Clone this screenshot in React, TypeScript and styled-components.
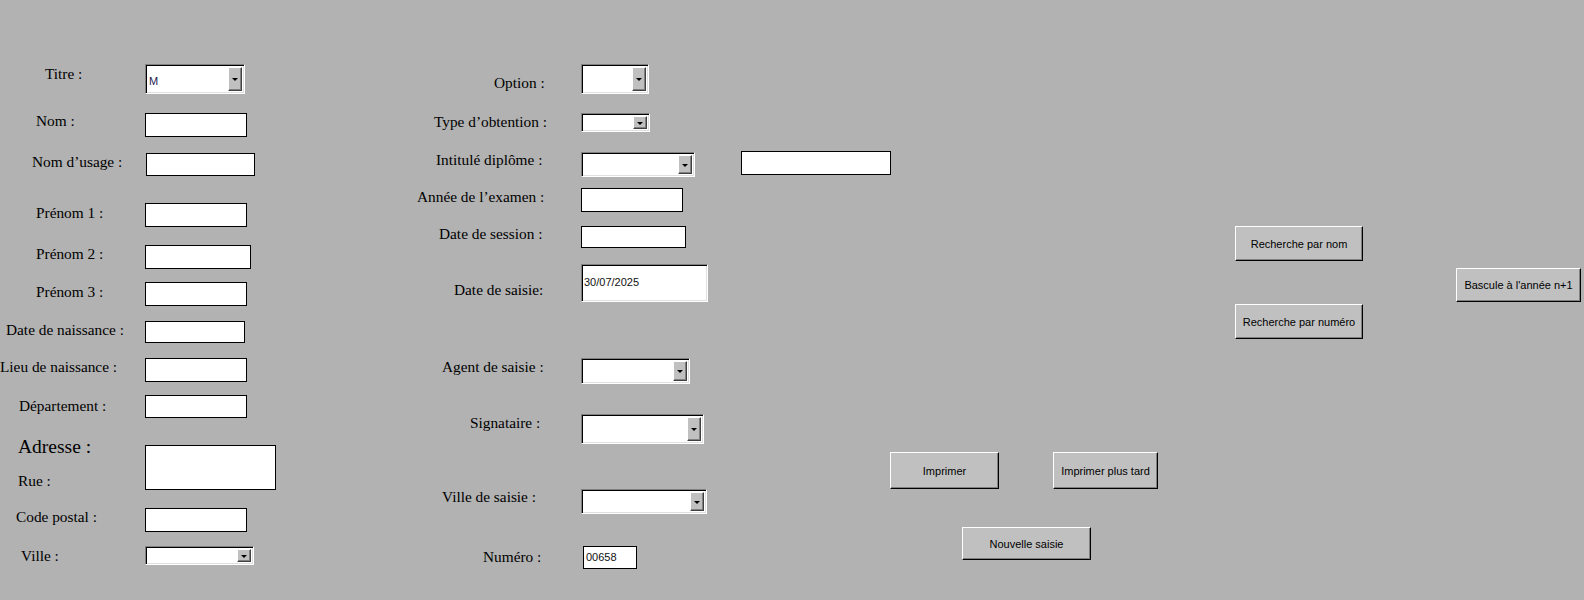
import React from 'react';
import styled, {createGlobalStyle} from 'styled-components';

const GlobalStyle = createGlobalStyle`
  html, body {
    margin: 0;
    padding: 0;
    background: #b2b2b2;
  }
`;

// the sheet: form controls sit on it at the place the form designer gave them
const Sheet = styled.div`
  position: relative;
  width: 1584px;
  height: 600px;
  background: #b2b2b2;
  overflow: hidden;
  font-family: "Liberation Serif", "Times New Roman", serif;
`;

interface Place {
    x: number;
    y: number;
    w?: number;
    h?: number;
}

const Placed = styled.div<{ $x: number; $y: number; $w?: number; $h?: number }>`
  position: absolute;
  left: ${({$x}) => $x}px;
  top: ${({$y}) => $y}px;
  ${({$w}) => ($w ? `width: ${$w}px;` : '')}
  ${({$h}) => ($h ? `height: ${$h}px;` : '')}
  box-sizing: border-box;
`;

const Label = styled(Placed)<{ $big?: boolean }>`
  font-size: ${({$big}) => ($big ? 19.5 : 15.33)}px;
  line-height: ${({$big}) => ($big ? 24 : 20)}px;
  color: #000;
  white-space: nowrap;
`;

const TextField = styled(Placed)<{ $sunken?: boolean }>`
  background: #fff;
  border: 1px solid #000;
  ${({$sunken}) =>
    $sunken &&
    `
    border-color: #808080 #fff #fff #808080;
    box-shadow: inset 1px 1px 0 #000, inset -1px -1px 0 #dfdfdf;
  `}
  font-family: "Liberation Sans", Arial, sans-serif;
  font-size: 11px;
  color: #111;
  display: flex;
  align-items: center;
  padding: 0 2px 2px;
`;

const SelectBox = styled(Placed)`
  background: #fff;
  border: 1px solid;
  border-color: #808080 #fff #fff #808080;
  box-shadow: inset 1px 1px 0 #000, inset -1px -1px 0 #dfdfdf;
  display: flex;
  align-items: stretch;
  padding: 2px;
  font-family: "Liberation Sans", Arial, sans-serif;
  font-size: 11px;
  color: #1a1a50;
`;

const SelectValue = styled.span`
  flex: 1;
  display: flex;
  align-items: center;
  padding-left: 1px;
  padding-top: 3px;
`;

const DropButton = styled.span`
  width: 14px;
  background: #c0c0c0;
  border: 1px solid;
  border-color: #fff #404040 #404040 #fff;
  box-shadow: inset -1px -1px 0 #808080;
  box-sizing: border-box;
  display: flex;
  align-items: center;
  justify-content: center;

  &::after {
    content: '';
    border-left: 3px solid transparent;
    border-right: 3px solid transparent;
    border-top: 3px solid #000;
    margin-top: 1px;
  }
`;

const Button = styled(Placed).attrs({as: 'button'})`
  background: #c0c0c0;
  border: 1px solid;
  border-color: #fff #000 #000 #fff;
  box-shadow: inset -1px -1px 0 #808080;
  font-family: "Liberation Sans", Arial, sans-serif;
  font-size: 11px;
  color: #000;
  padding: 0;
  cursor: default;
`;

type LabelDef = { text: string; x: number; cy: number; big?: boolean };

const labels: LabelDef[] = [
    {text: 'Titre :', x: 45, cy: 74},
    {text: 'Nom :', x: 36, cy: 121},
    {text: 'Nom d’usage :', x: 32, cy: 162},
    {text: 'Prénom 1 :', x: 36, cy: 213},
    {text: 'Prénom 2 :', x: 36, cy: 254},
    {text: 'Prénom 3 :', x: 36, cy: 292},
    {text: 'Date de naissance :', x: 6, cy: 330},
    {text: 'Lieu de naissance :', x: 0, cy: 367},
    {text: 'Département :', x: 19, cy: 406},
    {text: 'Adresse :', x: 18, cy: 447, big: true},
    {text: 'Rue :', x: 18, cy: 481},
    {text: 'Code postal :', x: 16, cy: 517},
    {text: 'Ville :', x: 21, cy: 556},
    {text: 'Option :', x: 494, cy: 83},
    {text: 'Type d’obtention :', x: 434, cy: 122},
    {text: 'Intitulé diplôme :', x: 436, cy: 160},
    {text: 'Année de l’examen :', x: 417, cy: 197},
    {text: 'Date de session :', x: 439, cy: 234},
    {text: 'Date de saisie:', x: 454, cy: 290},
    {text: 'Agent de saisie :', x: 442, cy: 367},
    {text: 'Signataire :', x: 470, cy: 423},
    {text: 'Ville de saisie :', x: 442, cy: 497},
    {text: 'Numéro :', x: 483, cy: 557},
];

const fields: (Place & { value?: string; sunken?: boolean })[] = [
    {x: 145, y: 113, w: 102, h: 24},
    {x: 146, y: 153, w: 109, h: 23},
    {x: 145, y: 203, w: 102, h: 24},
    {x: 145, y: 245, w: 106, h: 24},
    {x: 145, y: 282, w: 102, h: 24},
    {x: 145, y: 321, w: 100, h: 22},
    {x: 145, y: 358, w: 102, h: 24},
    {x: 145, y: 395, w: 102, h: 23},
    {x: 145, y: 445, w: 131, h: 45},
    {x: 145, y: 508, w: 102, h: 24},
    {x: 581, y: 188, w: 102, h: 24},
    {x: 581, y: 226, w: 105, h: 22},
    {x: 741, y: 151, w: 150, h: 24},
    {x: 581, y: 264, w: 127, h: 38, value: '30/07/2025', sunken: true},
    {x: 583, y: 546, w: 54, h: 23, value: '00658'},
];

const selects: (Place & { value?: string })[] = [
    {x: 145, y: 64, w: 100, h: 30, value: 'M'},
    {x: 145, y: 546, w: 109, h: 19},
    {x: 581, y: 64, w: 68, h: 30},
    {x: 581, y: 113, w: 69, h: 19},
    {x: 581, y: 152, w: 114, h: 25},
    {x: 581, y: 358, w: 109, h: 26},
    {x: 581, y: 414, w: 123, h: 30},
    {x: 581, y: 489, w: 126, h: 25},
];

const buttons: (Place & { text: string })[] = [
    {text: 'Recherche par nom', x: 1235, y: 226, w: 128, h: 35},
    {text: 'Recherche par numéro', x: 1235, y: 304, w: 128, h: 35},
    {text: "Bascule à l'année n+1", x: 1456, y: 268, w: 125, h: 34},
    {text: 'Imprimer', x: 890, y: 452, w: 109, h: 37},
    {text: 'Imprimer plus tard', x: 1053, y: 452, w: 105, h: 37},
    {text: 'Nouvelle saisie', x: 962, y: 527, w: 129, h: 33},
];

export default function App() {
    return (
        <>
            <GlobalStyle/>
            <Sheet>
                {labels.map((l) => (
                    <Label key={l.text} $x={l.x} $y={l.cy - (l.big ? 12 : 10)} $big={l.big}>
                        {l.text}
                    </Label>
                ))}
                {fields.map((f, i) => (
                    <TextField key={i} $x={f.x} $y={f.y} $w={f.w} $h={f.h} $sunken={f.sunken}>
                        {f.value}
                    </TextField>
                ))}
                {selects.map((s, i) => (
                    <SelectBox key={i} $x={s.x} $y={s.y} $w={s.w} $h={s.h}>
                        <SelectValue>{s.value}</SelectValue>
                        <DropButton/>
                    </SelectBox>
                ))}
                {buttons.map((b) => (
                    <Button key={b.text} $x={b.x} $y={b.y} $w={b.w} $h={b.h}>
                        {b.text}
                    </Button>
                ))}
            </Sheet>
        </>
    );
}
